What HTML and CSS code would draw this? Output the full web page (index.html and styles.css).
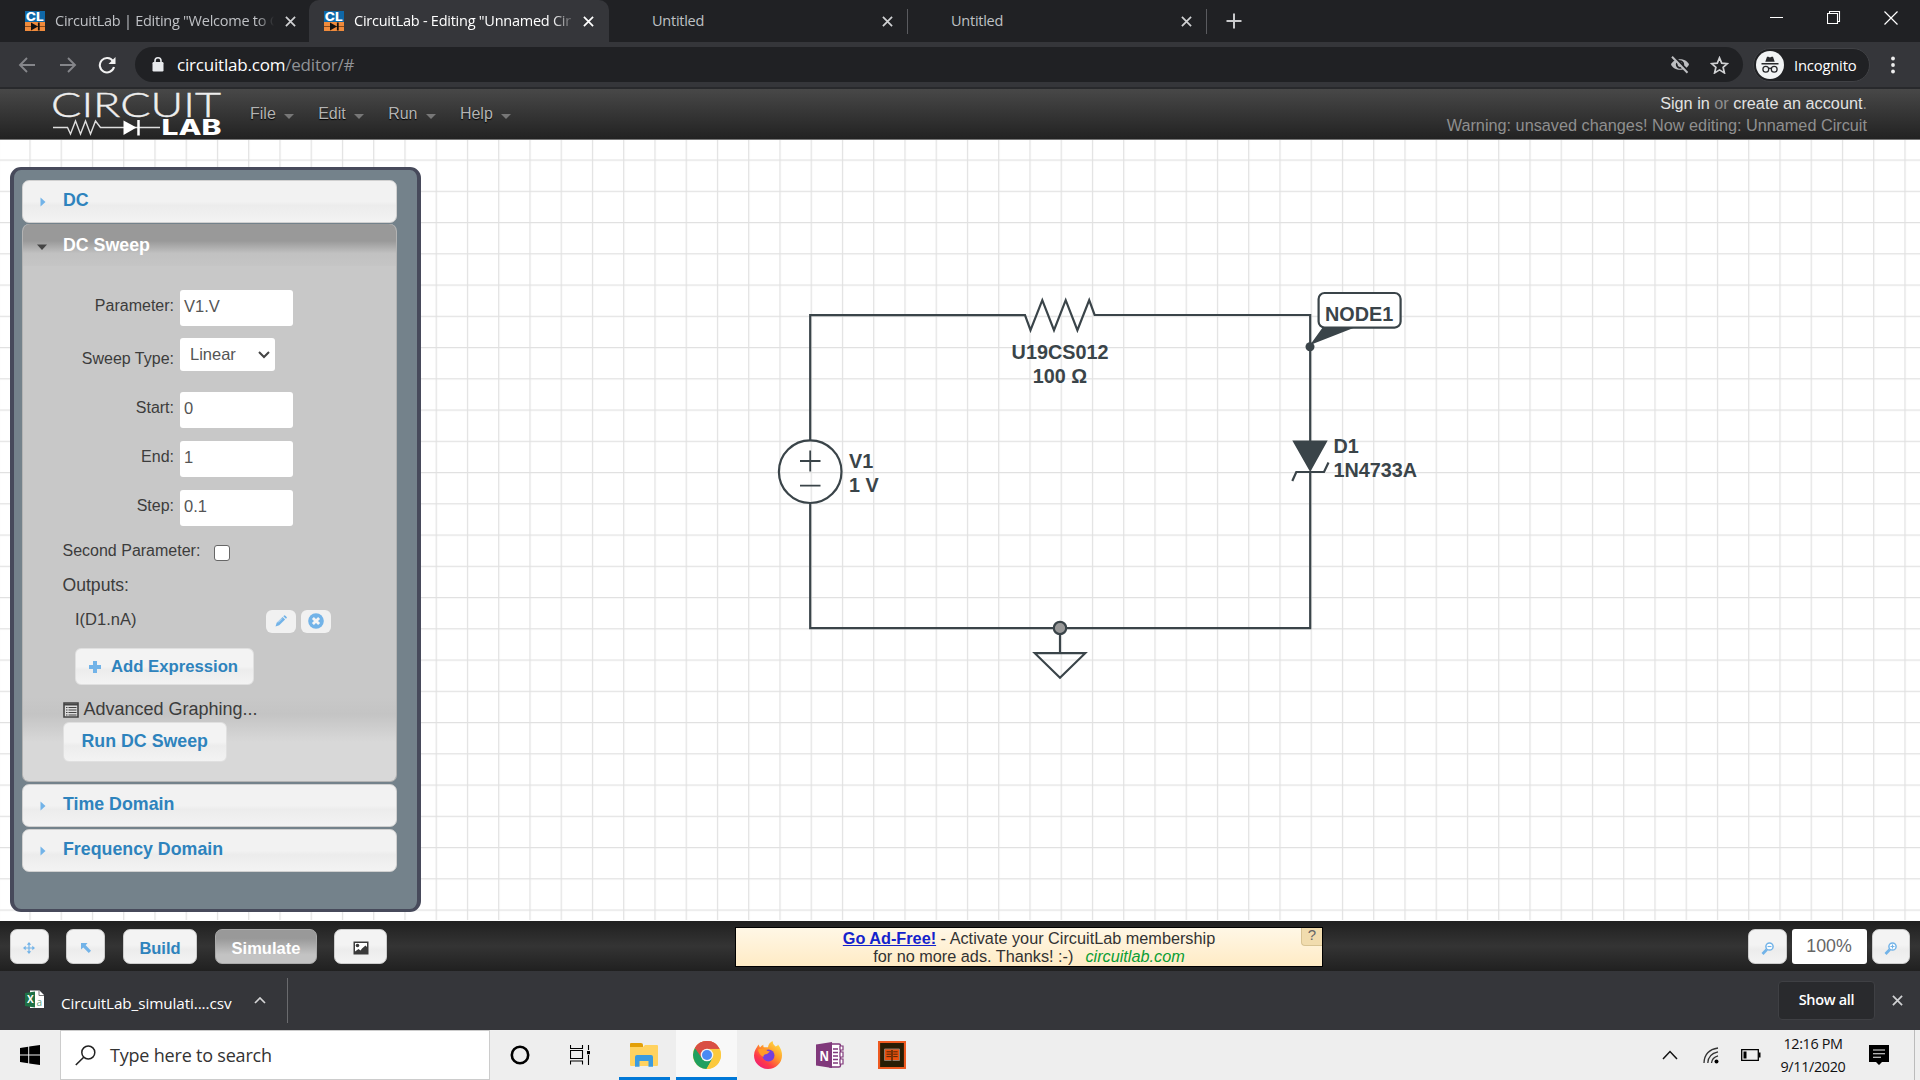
FILE: index.html
```html
<!DOCTYPE html>
<html lang="en">
<head>
<meta charset="utf-8">
<title>CircuitLab - Editing "Unnamed Circuit"</title>
<link rel="stylesheet" href="styles.css">
</head>
<body>
<svg width="0" height="0" class="defs">
  <defs>
    <symbol id="close" viewBox="0 0 12 12"><path d="M1 1l10 10M11 1L1 11" stroke="currentColor" stroke-width="1.9" fill="none"/></symbol>
    <symbol id="favicon" viewBox="0 0 20 20">
      <rect width="20" height="11" fill="#0f68a8"/><rect y="11" width="20" height="9" fill="#f08b3c"/>
      <path d="M0 15.500h20" stroke="#8a4a1c" stroke-width="1"/><path d="M6 11.500v8l7-4z" fill="#111"/><path d="M13.800 11.500v8" stroke="#111" stroke-width="1.800"/>
      <text x="0.800" y="9.600" font-family="Inter, sans-serif" font-weight="800" font-size="11.500" textLength="18" lengthAdjust="spacingAndGlyphs" fill="#fff">CL</text>
    </symbol>
    <symbol id="caret" viewBox="0 0 6 10"><path d="M0.500 0.500L5.500 5 0.500 9.500z" fill="#72b3e8"/></symbol>
  </defs>
</svg>

<div class="tabstrip">
  <div class="tab tab-first"><svg class="fav"><use href="#favicon"/></svg><span class="tab-title t1">CircuitLab | Editing "Welcome to C</span><svg class="x"><use href="#close"/></svg></div>
  <div class="tab tab-active"><svg class="fav"><use href="#favicon"/></svg><span class="tab-title t2">CircuitLab - Editing "Unnamed Cir</span><svg class="x"><use href="#close"/></svg></div>
  <div class="tab tab-blank"><span class="tab-title">Untitled</span><svg class="x"><use href="#close"/></svg></div>
  <div class="tab tab-blank"><span class="tab-title">Untitled</span><svg class="x"><use href="#close"/></svg></div>
  <svg class="plus" viewBox="0 0 16 16"><path d="M8 .5v15M.5 8h15" stroke="#c9cacc" stroke-width="2"/></svg>
  <div class="winctl">
    <svg width="14" height="14" viewBox="0 0 14 14"><path d="M0 6.500h13" stroke="#fff"/></svg>
    <svg width="14" height="14" viewBox="0 0 14 14"><path d="M.5 2.500h10v10H.5zM2.500 2.500v-2h10v10h-2" fill="none" stroke="#fff" stroke-width="1.100"/></svg>
    <svg width="14" height="14" viewBox="0 0 14 14"><path d="M.5.5l13 13M13.500.5l-13 13" stroke="#fff" stroke-width="1.200"/></svg>
  </div>
</div>

<div class="toolbar">
  <svg class="nav" width="18" height="16" viewBox="0 0 18 16"><path d="M17 8H2M9 1L2 8l7 7" fill="none" stroke="#85868a" stroke-width="1.900"/></svg>
  <svg class="nav" width="18" height="16" viewBox="0 0 18 16"><path d="M1 8h15M9 1l7 7-7 7" fill="none" stroke="#85868a" stroke-width="1.900"/></svg>
  <svg class="nav reload" width="18" height="18" viewBox="0 0 18 18"><path d="M15 5.200A7.200 7.200 0 1 0 16 11" fill="none" stroke="#f1f1f1" stroke-width="2.100"/><path d="M17.500 1v7h-7z" fill="#f1f1f1"/></svg>
  <div class="omnibox">
    <svg width="12" height="15" viewBox="0 0 12 15"><rect x=".5" y="5" width="11" height="9.500" rx="1.200" fill="#e8eaed"/><path d="M3 6V3.800a3 3 0 0 1 6 0V6" fill="none" stroke="#e8eaed" stroke-width="1.600"/></svg>
    <span class="url"><b>circuitlab.com</b>/editor/#</span>
    <svg class="eye" width="20" height="18" viewBox="0 0 20 18"><path d="M1 8.500C4 1.500 16 1.500 19 8.500 16 15.500 4 15.500 1 8.500z" fill="#bdbec1"/><circle cx="10" cy="8.500" r="3.300" fill="#bdbec1" stroke="#202124" stroke-width="1.800"/><path d="M3.500 0l15 15.500" stroke="#202124" stroke-width="2.500"/><path d="M2 .8l15.500 16" stroke="#bdbec1" stroke-width="2"/></svg>
    <svg class="star" width="19" height="18" viewBox="0 0 19 18"><path d="M9.500 1.800l2.200 5.300 5.700.5-4.300 3.700 1.300 5.600-4.900-3-4.900 3 1.300-5.600L1.600 7.600l5.700-.5z" fill="none" stroke="#d0d1d3" stroke-width="1.700"/></svg>
  </div>
  <div class="incognito">
    <svg width="28" height="28" viewBox="0 0 28 28"><circle cx="14" cy="14" r="14" fill="#f1f3f4"/><path d="M9.300 10.700L11 5.800h1.400l1.600.6 1.600-.6H17l1.700 4.900zM5.500 12h17v1.500h-17z" fill="#27282b"/><g fill="none" stroke="#27282b" stroke-width="1.300"><circle cx="9.800" cy="18.200" r="2.900"/><circle cx="18.200" cy="18.200" r="2.900"/><path d="M12.600 17.600q1.400-.8 2.800 0"/></g></svg>
    <span>Incognito</span>
  </div>
  <svg class="dots" width="4" height="18" viewBox="0 0 4 18"><g fill="#eee"><circle cx="2" cy="2.500" r="1.900"/><circle cx="2" cy="9" r="1.900"/><circle cx="2" cy="15.500" r="1.900"/></g></svg>
</div>

<header class="app-header">
  <svg class="logo" width="172" height="50" viewBox="0 0 172 50">
    <text x="-1" y="27.500" font-family="Lato, sans-serif" font-weight="300" font-size="33.500" textLength="170" lengthAdjust="spacingAndGlyphs" fill="#eee" stroke="#eee" stroke-width=".4">CIRCUIT</text>
    <path d="M1 38.500h14.500l3 6.500 5-13 5 13 5-13 5 13 5-13 5 6.500h59.500" fill="none" stroke="#ddd" stroke-width="1.400"/>
    <path d="M71.500 31.500l13 7-13 7.500z" fill="#fff"/><path d="M86.500 31v15.500" stroke="#fff" stroke-width="2.500"/>
    <text x="109.500" y="46.200" font-family="Inter, sans-serif" font-weight="800" font-size="21" textLength="60" lengthAdjust="spacingAndGlyphs" fill="#fff">LAB</text>
  </svg>
  <nav class="menu"><span>File</span><span>Edit</span><span>Run</span><span>Help</span></nav>
  <div class="account"><div><b>Sign in</b> or <b>create an account</b>.</div><div>Warning: unsaved changes! Now editing: Unnamed Circuit</div></div>
</header>

<main class="workspace">
  <svg class="canvas" width="1920" height="780" viewBox="0 140 1920 780">
    <defs><pattern id="grid" x="29.400" y="159.500" width="31.250" height="31.250" patternUnits="userSpaceOnUse"><path d="M0 0v31.250M0 0h31.250" stroke="#e1e1e1" stroke-width="2.400"/></pattern></defs>
    <rect y="140" width="1920" height="780" fill="url(#grid)"/>
    <g fill="none" stroke="#3a4449" stroke-width="2.200">
      <path d="M810.200 440V315.200H1025l5.500 15 11.800-30 11.700 30 11.700-30 11.700 30 11.800-30 5.400 14.800H1310.200V441M1310.200 471V628.200H810.200V503"/>
      <circle cx="810.200" cy="471.700" r="31.300"/>
      <path d="M800 461h20.500M810.200 450.500v21M800 485.700h20.500" stroke-width="1.800"/>
      <path d="M1060 628v25M1034.800 653.200h50.400L1060 677.800zM1292.300 481l4-9h27.700l4.500-9.500"/>
      <rect x="1318.600" y="293" width="82" height="34.600" rx="6" fill="#fff"/>
      <circle cx="1060" cy="628" r="6.200" fill="#999"/>
    </g>
    <g fill="#3a4449"><path d="M1292.300 440.500h35.400L1310.200 472zM1310 345l13-18h33z"/><circle cx="1310" cy="346.700" r="4.500"/></g>
    <g class="labels">
      <text x="849" y="468">V1</text><text x="849" y="492">1 V</text>
      <text x="1060" y="359" text-anchor="middle">U19CS012</text><text x="1060" y="383" text-anchor="middle">100 Ω</text>
      <text x="1325" y="320.500">NODE1</text>
      <text x="1333.500" y="452.500">D1</text><text x="1333.500" y="476.500">1N4733A</text>
    </g>
  </svg>

  <aside class="panel">
    <div class="acc"><svg class="caret"><use href="#caret"/></svg>DC</div>
    <div class="sweep">
      <div class="acc-open"><svg width="10" height="6" viewBox="0 0 10 6"><path d="M0 .5h10L5 6z" fill="#444"/></svg>DC Sweep</div>
      <div class="form">
        <div class="row"><label>Parameter:</label><span class="field">V1.V</span></div>
        <div class="row type"><label>Sweep Type:</label><span class="field select">Linear<svg width="12" height="8" viewBox="0 0 12 8"><path d="M1 1l5 5 5-5" fill="none" stroke="#444" stroke-width="2"/></svg></span></div>
        <div class="row"><label>Start:</label><span class="field">0</span></div>
        <div class="row"><label>End:</label><span class="field">1</span></div>
        <div class="row"><label>Step:</label><span class="field">0.1</span></div>
        <div class="second">Second Parameter:<span class="check"></span></div>
        <div class="outputs">Outputs:</div>
        <div class="expr"><span>I(D1.nA)</span>
          <i class="mini"><svg width="14" height="14" viewBox="0 0 14 14"><path d="M1.500 12.500l1.200-3.700L8.600 3l2.500 2.500-5.900 5.800z" fill="#72b3e8"/><path d="M9.300 2.300l1-1 1.500.8L13 3.800l-1.100 1z" fill="#72b3e8"/><path d="M4 8.500l4-4" stroke="#dcebf7" stroke-width=".8"/></svg></i>
          <i class="mini"><svg width="16" height="16" viewBox="0 0 16 16"><circle cx="8" cy="8" r="7.800" fill="#72b3e8"/><path d="M4.900 4.900l6.200 6.200M11.100 4.900l-6.200 6.200" stroke="#f5f5f5" stroke-width="2.800"/></svg></i>
        </div>
        <div class="btn add"><svg width="12" height="12" viewBox="0 0 12 12"><path d="M6 0v12M0 6h12" stroke="#72b3e8" stroke-width="4"/></svg>Add Expression</div>
        <div class="adv"><svg width="16" height="16" viewBox="0 0 16 16"><path d="M1 1h14v14H1z" fill="#ddd" stroke="#444" stroke-width="1.600"/><path d="M1 2.500h14" stroke="#444" stroke-width="2"/><path d="M3 5.500h1.500M3 8h1.500M3 10.500h1.500M3 13h1.500M5.500 5.500h8M5.500 8h8M5.500 10.500h8M5.500 13h8" stroke="#444" stroke-width="1.200"/></svg>Advanced Graphing...</div>
        <div class="btn run">Run DC Sweep</div>
      </div>
    </div>
    <div class="acc"><svg class="caret"><use href="#caret"/></svg>Time Domain</div>
    <div class="acc"><svg class="caret"><use href="#caret"/></svg>Frequency Domain</div>
  </aside>
</main>

<div class="bottombar">
  <div class="bbtn move"><svg width="12" height="12" viewBox="0 0 12 12"><path d="M6 1v10M1 6h10" stroke="#72b3e8" stroke-width="1.200"/><path d="M6 0l2.200 2.700H3.800zM6 12l2.200-2.700H3.800zM0 6l2.700-2.200v4.400zM12 6L9.300 3.800v4.400z" fill="#72b3e8"/></svg></div>
  <div class="bbtn arrow"><svg width="10" height="10" viewBox="0 0 10 10"><path d="M0 0h6.500L4.700 2.200 10 7.800 7.800 10 2.300 4.600 0 6.500z" fill="#72b3e8"/></svg></div>
  <div class="bbtn build">Build</div>
  <div class="bbtn simulate">Simulate</div>
  <div class="bbtn image"><svg width="16" height="14" viewBox="0 0 16 14"><path d="M.5.5h15v13H.5z" fill="#3a3a3a"/><path d="M2 2h12v4l-1.500-1.500L9 7.500 7.500 9.500 5.500 8 2 10.500z" fill="#fff"/><circle cx="4.500" cy="4.500" r="1.800" fill="#3a3a3a"/></svg></div>
  <div class="ad"><div class="ad-text"><div><a>Go Ad-Free!</a> - Activate your CircuitLab membership</div><div>for no more ads. Thanks! :-) &nbsp;<em>circuitlab.com</em></div></div><span class="help">?</span></div>
  <div class="bbtn zoom"><svg width="13" height="13" viewBox="0 0 13 13"><circle cx="8.500" cy="4.500" r="3.600" fill="#fff" stroke="#72b3e8" stroke-width="1.500"/><path d="M5.800 7.500L1.500 12" stroke="#72b3e8" stroke-width="2.800"/><path d="M6.500 4.500h4" stroke="#72b3e8" stroke-width="1.200"/></svg></div>
  <div class="pct">100%</div>
  <div class="bbtn zoom"><svg width="13" height="13" viewBox="0 0 13 13"><circle cx="8.500" cy="4.500" r="3.600" fill="#fff" stroke="#72b3e8" stroke-width="1.500"/><path d="M5.800 7.500L1.500 12" stroke="#72b3e8" stroke-width="2.800"/><path d="M6.500 4.500h4M8.500 2.500v4" stroke="#72b3e8" stroke-width="1.200"/></svg></div>
</div>

<div class="downloads">
  <svg class="csv" width="20" height="19" viewBox="0 0 20 19"><path d="M5 .5h9.500l4.500 4.500v13H5z" fill="#fff"/><path d="M14 .5V5.500h5" fill="none" stroke="#777" stroke-width="1"/><path d="M0 3l10-1.600v16L0 16z" fill="#1f7145"/><text x="2" y="13" font-family="Open Sans, sans-serif" font-weight="700" font-size="10" fill="#fff">X</text><text x="11.500" y="16" font-family="Open Sans, sans-serif" font-size="10" fill="#5aa07c">a</text></svg>
  <span class="fname">CircuitLab_simulati....csv</span>
  <svg class="chev" width="12" height="7" viewBox="0 0 12 7"><path d="M1 6l5-5 5 5" fill="none" stroke="#d5d5d6" stroke-width="1.700"/></svg>
  <span class="showall">Show all</span>
  <svg class="x"><use href="#close"/></svg>
</div>

<div class="taskbar">
  <div class="start"><svg width="20" height="20" viewBox="0 0 20 20"><path d="M0 3l8.200-1.200v7.700H0zM9.200 1.600L20 0v9.500H9.200zM0 10.500h8.200v7.700L0 17zM9.200 10.500H20V20L9.200 18.400z"/></svg></div>
  <div class="search"><svg width="21" height="21" viewBox="0 0 21 21"><circle cx="13.300" cy="7.500" r="6.500" fill="none" stroke="#222" stroke-width="1.500"/><path d="M8.700 12.200L.8 20" stroke="#222" stroke-width="1.600"/></svg><span>Type here to search</span></div>
  <div class="tile"><svg width="20" height="20" viewBox="0 0 20 20"><circle cx="10" cy="10" r="8.200" fill="none" stroke="#000" stroke-width="2.600"/></svg></div>
  <div class="tile"><svg width="20" height="20" viewBox="0 0 20 20"><path d="M.5 0v3.500h12V0M.5 5.500h12v8H.5zM.5 19.500V16h12v3.500M18.500 0v5M18.500 10v10" fill="none" stroke="#000" stroke-width="1.100"/><path d="M17 6h3.200v3.200H17z"/></svg></div>
  <div class="tile under"><svg width="28" height="24" viewBox="0 0 28 24"><path d="M0 4V1Q0 0 1 0h10q2 0 2 2v3H0z" fill="#e3a008"/><path d="M0 4h13l2-2h12q1 0 1 1v19q0 1-1 1H1q-1 0-1-1z" fill="#ffd25f"/><path d="M5 23.800V14q0-2 2-2h14q2 0 2 2v9.800h-4.500V18h-9v5.800z" fill="#3b9be0"/></svg></div>
  <div class="tile wide under on"><svg width="28" height="28" viewBox="0 0 28 28"><circle cx="14" cy="14" r="14" fill="#fbc93e"/><path d="M14 14L1.900 7A14 14 0 0 1 26.500 7.700z" fill="#d94f43"/><path d="M14 14L1.900 7A14 14 0 0 0 13.500 28l6-10.500z" fill="#1fa05f"/><path d="M14 7.700h12.400a14 14 0 0 1-12.900 20.300l6-10.600z" fill="#fbc93e"/><path d="M14 7.700h12.400A14 14 0 0 0 1.900 7l6.500 9.500z" fill="#d94f43"/><circle cx="14" cy="14" r="6.300" fill="#f4f4f4"/><circle cx="14" cy="14" r="5" fill="#4a8af4"/></svg></div>
  <div class="tile"><svg width="28" height="28" viewBox="0 0 28 28"><defs><linearGradient id="fx" x1="1" y1="0" x2="0.200" y2="1"><stop offset="0" stop-color="#fff04a"/><stop offset=".45" stop-color="#ff9a2a"/><stop offset=".75" stop-color="#ff3b47"/><stop offset="1" stop-color="#ec1a7c"/></linearGradient></defs><path d="M1.500 8.500L4.500 3.500l1.500 3q1.500-2 3.500-2.800-.5 1.500.3 2.600H14Q14.500 2 18.500 0q0 3 3 5.500Q24 5 24 3.500q4 5 4 11A14 13.500 0 0 1 0 14.500Q0 11 1.500 8.500z" fill="url(#fx)"/><circle cx="14.500" cy="14.500" r="6" fill="#7540dd"/><path d="M4 8.500q6-2.500 9.500 1.500l2.500.5-3 2.500q-4 .5-3.500 3Q5 14 4 8.500z" fill="#ff9a28"/></svg></div>
  <div class="tile"><svg width="28" height="26" viewBox="0 0 28 26"><path d="M14 2h9q1.500 0 1.500 1.500v20q0 1.500-1.500 1.500h-9z" fill="#fff" stroke="#80397b" stroke-width="1.400"/><path d="M24 4h3v4h-3zM24 10h3v5h-3zM24 17h3v5h-3z" fill="#fff" stroke="#80397b" stroke-width="1.200"/><path d="M17 7h5M17 10.500h5M17 14h5M17 17.500h5M17 21h5" stroke="#80397b" stroke-width="1.400"/><path d="M0 2.500L16 0v26L0 23.500z" fill="#80397b"/><text x="3.500" y="18.500" font-family="Open Sans, sans-serif" font-weight="700" font-size="14.500" textLength="9.500" lengthAdjust="spacingAndGlyphs" fill="#fff">N</text></svg></div>
  <div class="tile"><svg width="28" height="28" viewBox="0 0 28 28"><path d="M1 1h26v26H1z" fill="#281d04" stroke="#ee5a20" stroke-width="2.200"/><path d="M6.500 8h15v11.500h-15z" fill="#e9500e" stroke="#8b7a6a"/><path d="M14 9v11" stroke="#281d04" stroke-width="1.200"/><path d="M8.500 10.800H13M8.500 13.200H13M8.500 15.600H13M15.200 10.800h4.500M15.200 13.200h4.500M15.200 15.600h4.500" stroke="#281d04" stroke-width=".8"/></svg></div>
  <div class="tray">
    <svg class="up" width="16" height="10" viewBox="0 0 16 10"><path d="M1 9l7-7.500L15 9" fill="none" stroke="#111" stroke-width="1.500"/></svg>
    <svg class="wifi" width="17" height="17" viewBox="0 0 17 17"><g fill="none" stroke="#333" stroke-width="1.300"><path d="M1 16Q1.500 3 15 1"/><path d="M4.800 16Q5 7 15 4.800"/><path d="M8.500 16Q9 10.500 15 8.800"/></g><circle cx="13.500" cy="14.500" r="2"/></svg>
    <svg class="batt" width="20" height="12" viewBox="0 0 20 12"><path d="M.7.7h16.600v10.600H.7z" fill="none" stroke="#000" stroke-width="1.300"/><path d="M2.500 2.500h3v7h-3zM18 3.500h1.500v5H18z"/></svg>
    <div class="clock"><div>12:16 PM</div><div>9/11/2020</div></div>
    <svg class="note" width="20" height="20" viewBox="0 0 20 20"><path d="M0 0h20v17h-7l-3 3-3-3H0z"/><path d="M4 5h12M4 8.700h12M4 12.300h8" stroke="#eee" stroke-width="1.100"/></svg>
  </div>
</div>
</body>
</html>
```
FILE: styles.css
```css
* { box-sizing: border-box; }
body { margin: 0; width: 1920px; height: 1080px; overflow: hidden; background: #fff; font-family: "Liberation Sans", Arial, sans-serif; font-size: 16px; color: #3c3c3c; display: flex; flex-direction: column; }
svg { display: block; flex: none; }
.defs { display: none; }

/* browser chrome */
.tabstrip { height: 42px; background: #202124; display: flex; font: 14.5px "Open Sans", "Noto Sans", sans-serif; color: #bfc1c5; }
.tab { height: 42px; display: flex; align-items: center; padding-right: 14px; white-space: nowrap; }
.fav { width: 20px; height: 20px; margin-right: 10px; }
.x { width: 11px; height: 11px; color: #d0d1d3; }
.tab-title { overflow: hidden; flex: 1; letter-spacing: -0.25px; padding-bottom: 2px; }
.tab .x { margin-left: 10px; }
.tab-first { width: 309px; padding-left: 25px; padding-right: 13px; }
.t1 { -webkit-mask-image: linear-gradient(90deg, #000 205px, transparent 222px); mask-image: linear-gradient(90deg, #000 202px, transparent 219px); }
.t2 { -webkit-mask-image: linear-gradient(90deg, #000 198px, transparent 222px); mask-image: linear-gradient(90deg, #000 198px, transparent 222px); }
.tab-active { width: 300px; padding-left: 15px; padding-right: 15px; background: #35363a; color: #fff; border-radius: 10px 10px 0 0; }
.tab-active .x { color: #fff; }
.tab-blank { width: 299px; padding-left: 43px; position: relative; }
.tab-blank::after { content: ""; position: absolute; right: 0; top: 9px; width: 1px; height: 25px; background: #5a5b5f; }
.tab-blank .x { margin-right: 1px; }
.plus { width: 16px; height: 16px; margin: 13px 0 0 19px; }
.winctl { margin-left: auto; display: flex; gap: 43px; padding: 11px 22px 0 0; }
.toolbar { height: 47px; background: #35363a; border-bottom: 2px solid #28292c; display: flex; align-items: center; font-family: "Open Sans", "Noto Sans", sans-serif; padding-left: 18px; }
.nav { margin-right: 23px; }
.reload { margin: 0 19px 0 -2px; }
.omnibox { width: 1608px; height: 35px; border-radius: 18px; background: #202124; display: flex; align-items: center; padding: 0 14px 0 17px; }
.url { margin-left: 13px; flex: 1; font-size: 17px; color: #919397; letter-spacing: -0.2px; }
.url b { font-weight: 400; color: #fff; }
.eye { margin-right: 20px; }
.incognito { margin-left: 10px; width: 117px; height: 34px; border: 1px solid #404145; border-radius: 17px; background: #202124; display: flex; align-items: center; padding-left: 2px; color: #fff; font-size: 14.8px; }
.incognito span { margin-left: 10px; letter-spacing: -0.2px; }
.dots { margin-left: 21px; }

/* application header */
.app-header { height: 51px; background: linear-gradient(#484848, #222); border-bottom: 1px solid #777; display: flex; padding-right: 53px; }
.logo { margin: 0 0 0 52px; }
.menu { display: flex; align-items: flex-start; margin-left: 26px; padding-top: 16px; line-height: 18px; color: #b3b3b3; text-shadow: 0 1px 1px #000; }
.menu span { display: flex; align-items: center; margin-right: 24.4px; }
.menu span::after { content: ""; margin: 4px 0 0 8px; border: 5px solid transparent; border-top-color: #777; border-bottom: 0; }
.account { margin-left: auto; text-align: right; font-size: 16.25px; line-height: 21.500px; padding-top: 4px; color: #8f8f8f; white-space: nowrap; }
.account b { font-weight: 400; color: #e2e2e2; }

/* schematic and side panel share one area */
.workspace { height: 781px; display: grid; overflow: hidden; }
.canvas, .panel { grid-area: 1 / 1; }
.labels { font: bold 19.8px "Liberation Sans", Arial, sans-serif; fill: #3a4449; }
.panel { z-index: 1; margin: 27px 0 0 10px; width: 411px; height: 745px; border: 4px solid #474a5b; border-top-width: 3px; border-bottom-width: 3px; border-radius: 11px; background: #74828b; padding: 10px 20px 0 8px; }
.acc, .acc-open { height: 43px; border-radius: 7px; display: flex; align-items: center; font-weight: bold; font-size: 17.8px; color: #2e83bd; padding: 0 0 2px 17px; }
.acc { background: linear-gradient(#f2f2f2 50%, #ececec 60%, #f3f3f3); border: 1px solid #d0d0d0; margin-bottom: 1px; }
.caret { width: 6px; height: 10px; margin: 2px 17px 0 0; }
.sweep { height: 558px; border-radius: 7px; background: linear-gradient(#c8c8c8 85%, #c4c4c4 88%, #d8d8d8 93%); border: 1px solid #b3b3b3; border-top: 0; margin-bottom: 2px; }
.sweep + .acc { margin-bottom: 2px; }
.acc-open { height: 42px; border-radius: 7px 7px 0 0; padding: 0 0 0 14px; color: #fff; background: linear-gradient(#999 0 40%, #c1c1c1 70%, #c5c5c5); }
.acc-open svg { margin: 3px 16px 0 0; }
.form { padding: 17px 0 0 39.5px; }
.row { height: 49px; display: flex; align-items: center; }
.row label { width: 111.5px; text-align: right; padding-bottom: 3px; }
.field { width: 113px; height: 36px; margin-left: 6px; background: #fff; border-radius: 3px; font-size: 16.5px; color: #555; display: flex; align-items: center; padding: 0 0 2px 4px; }
.type { height: 45px; margin-bottom: 8px; }
.type label { padding: 8px 0 0; }
.select { width: 95px; height: 33px; padding: 0 5px 0 10px; justify-content: space-between; }
.second { height: 38px; display: flex; align-items: center; }
.check { width: 16px; height: 16px; margin: 3px 0 0 14px; background: #fff; border: 1px solid #666; border-radius: 3px; }
.outputs { height: 30px; line-height: 30px; font-size: 17.6px; }
.expr { height: 42px; display: flex; align-items: center; padding-left: 12.5px; }
.expr span { width: 190.5px; padding-bottom: 4px; font-size: 16.500px; }
.mini { width: 30px; height: 23px; border-radius: 6px; background: #f1f1f1; display: flex; align-items: center; justify-content: center; margin-right: 5px; }
.btn { background: linear-gradient(#f3f3f3 50%, #ececec 60%, #f3f3f3); border: 1px solid #e0e0e0; border-radius: 6px; font-weight: bold; color: #2e83bd; display: flex; align-items: center; font-size: 17.800px; }
.add { width: 179px; height: 37px; margin: 6px 0 0 12.5px; padding-left: 13px; font-size: 16.7px; }
.add svg { margin-right: 10px; }
.adv { display: flex; align-items: center; height: 37px; padding-top: 12px; font-size: 18px; gap: 5px; }
.run { width: 164px; height: 40px; padding: 0 0 2px 18px; }

/* bottom toolbar */
.bottombar { height: 50px; background: linear-gradient(#202020, #343434 50%, #202020); display: flex; align-items: flex-start; padding: 8px 10px 0; }
.bbtn { height: 35px; border-radius: 7px; background: linear-gradient(#f3f3f3 45%, #ececec 60%, #f3f3f3); border: 1px solid #ccc; display: flex; align-items: center; justify-content: center; font-weight: bold; font-size: 16.500px; color: #2e83bd; padding-top: 3px; }
.move { width: 39px; margin-right: 17px; padding-right: 2px; }
.arrow { width: 39px; margin-right: 18px; }
.build { width: 74px; margin-right: 18px; }
.simulate { width: 102px; margin-right: 17px; color: #fff; background: linear-gradient(#999 25%, #c3c3c3 75%); border-color: #aaa; }
.image { width: 53px; }
.ad { width: 588px; height: 40px; margin: -2px 0 0 348px; border: 1px solid #000; background: linear-gradient(#fff7e6, #ffebc5); display: grid; justify-items: center; }
.ad-text { grid-area: 1 / 1; text-align: center; line-height: 18px; padding-top: 1px; font-size: 16.25px; color: #333; }
.ad a { font-weight: bold; color: #1422cc; text-decoration: underline; }
.ad em { color: #0a9d34; margin-left: 3px; }
.help { grid-area: 1 / 1; justify-self: end; width: 21px; height: 18px; text-align: center; line-height: 13px; font-size: 15px; background: #f1dcae; border: 1px solid #d8c393; border-width: 0 0 1px 1px; border-radius: 0 0 0 4px; color: #666; }
.zoom { width: 38.500px; }
.ad + .zoom { margin-left: auto; }
.pct { width: 75px; height: 35px; margin: 0 5px; background: #fff; border-radius: 3px; text-align: center; line-height: 34px; font-size: 17.8px; color: #666; }

/* download shelf */
.downloads { height: 59px; background: #35363a; display: flex; align-items: center; padding-right: 17px; color: #fff; font-family: "Open Sans", "Noto Sans", sans-serif; }
.csv { margin: 0 16px 2px 25px; }
.fname { width: 193px; font-size: 15.3px; letter-spacing: -0.1px; padding-top: 4px; white-space: nowrap; }
.chev { margin-bottom: 1px; padding: 0; }
.downloads::before { content: ""; order: 1; width: 1px; height: 45px; margin-left: 21px; background: #6a6b6e; }
.showall { order: 2; margin: 0 17px 0 auto; width: 97px; height: 39px; background: #292a2d; border: 1px solid #3f4044; border-radius: 4px; font-weight: 600; font-size: 14.500px; letter-spacing: -0.3px; line-height: 36px; text-align: center; }
.downloads .x { order: 3; }

/* taskbar */
.taskbar { height: 50px; background: #eee; display: flex; font-family: "Open Sans", "Noto Sans", sans-serif; }
.start { width: 60px; display: flex; align-items: center; justify-content: center; }
.search { width: 430px; background: #fff; border: 1px solid #ccc; display: flex; align-items: center; padding-left: 14px; font-size: 18px; color: #333; }
.search span { margin: 0 0 0 14px; letter-spacing: -0.2px; }
.tile { width: 61px; height: 50px; display: flex; align-items: center; justify-content: center; }
.search + .tile, .search + .tile + .tile { width: 60px; }
.tile.under { width: 66px; padding-left: 2px; background: linear-gradient(#0078d7, #0078d7) 9px 100% / 51px 3px no-repeat; }
.tile.wide { width: 61px; padding: 0; background: linear-gradient(#0078d7, #0078d7) 0 100% / 61px 3px no-repeat #f8f8f8; }
.tile.wide + .tile, .tile.wide + .tile + .tile, .tile.wide + .tile + .tile + .tile { width: 62px; }
.tray { margin-left: auto; margin-right: 5px; padding-right: 25px; border-right: 1px solid #bbb; display: flex; align-items: center; font-size: 14.4px; color: #111; }
.up { margin-right: 25px; }
.wifi { margin-right: 21px; }
.batt { margin-right: 17px; }
.clock { width: 70px; text-align: center; line-height: 23px; letter-spacing: -0.35px; white-space: nowrap; }
.note { margin-left: 21px; }
```
